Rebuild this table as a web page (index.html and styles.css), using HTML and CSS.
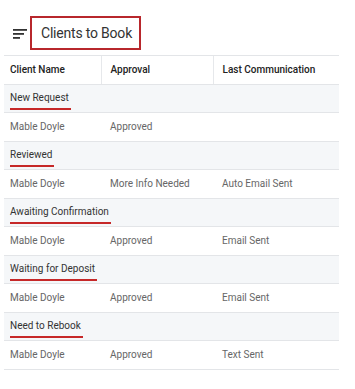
FILE: index.html
```html
<!DOCTYPE html>
<html lang="en">
<head>
<meta charset="utf-8">
<title>Clients to Book</title>
<link rel="stylesheet" href="styles.css">
</head>
<body>
  <div class="toolbar">
    <svg class="sort-icon" width="14" height="10" viewBox="0 0 14 10" aria-hidden="true">
      <rect x="0" y="0" width="14" height="1.8" />
      <rect x="0" y="4" width="11" height="1.8" />
      <rect x="0" y="8" width="7" height="1.8" />
    </svg>
    <h1 class="title">Clients to Book</h1>
  </div>

  <table class="clients">
    <colgroup>
      <col class="col-name">
      <col class="col-approval">
      <col class="col-comm">
    </colgroup>
    <thead>
      <tr>
        <th>Client Name</th>
        <th>Approval</th>
        <th>Last Communication</th>
      </tr>
    </thead>
    <tbody>
      <tr class="group"><td colspan="3"><span class="group-label">New Request</span></td></tr>
      <tr><td>Mable Doyle</td><td>Approved</td><td></td></tr>
      <tr class="group"><td colspan="3"><span class="group-label">Reviewed</span></td></tr>
      <tr><td>Mable Doyle</td><td>More Info Needed</td><td>Auto Email Sent</td></tr>
      <tr class="group"><td colspan="3"><span class="group-label">Awaiting Confirmation</span></td></tr>
      <tr><td>Mable Doyle</td><td>Approved</td><td>Email Sent</td></tr>
      <tr class="group"><td colspan="3"><span class="group-label">Waiting for Deposit</span></td></tr>
      <tr><td>Mable Doyle</td><td>Approved</td><td>Email Sent</td></tr>
      <tr class="group"><td colspan="3"><span class="group-label">Need to Rebook</span></td></tr>
      <tr><td>Mable Doyle</td><td>Approved</td><td>Text Sent</td></tr>
    </tbody>
  </table>
</body>
</html>
```

FILE: styles.css
```css
html, body {
  margin: 0;
  padding: 0;
  background: #ffffff;
}

body {
  font-family: Roboto, "Liberation Sans", Arial, sans-serif;
  color: #333;
}

.toolbar {
  display: flex;
  align-items: center;
  gap: 3px;
  padding: 16px 0 0 13px;
  height: 34px;
}

.sort-icon {
  fill: #333;
  display: block;
  margin-top: 1px;
}

.title {
  margin: 0;
  box-sizing: border-box;
  height: 34px;
  padding: 0 7px 0 9px;
  border: 2px solid #b8272c;
  font-size: 14px;
  letter-spacing: -0.2px;
  font-weight: 400;
  line-height: 30px;
  color: #333;
}

.clients {
  margin: 5px 0 0 4px;
  width: 335px;
  border-collapse: collapse;
  table-layout: fixed;
  font-size: 10px;
}

.col-name { width: 97px; }
.col-approval { width: 112px; }
.col-comm { width: 126px; }

.clients th,
.clients td {
  height: 28.5px;
  box-sizing: border-box;
  padding: 0 0 0 9px;
  border-bottom: 1px solid #e3e5e8;
  text-align: left;
  white-space: nowrap;
  overflow: hidden;
}

.clients th:first-child,
.clients td:first-child {
  padding-left: 6px;
}

.clients th {
  font-weight: 500;
  color: #222;
  border-top: 1px solid #e3e5e8;
}

.clients th + th {
  border-left: 1px solid #e6e8eb;
}

.clients td {
  color: #666;
}

.clients tr.group td {
  background: #f5f7f9;
  color: #333;
  vertical-align: bottom;
  padding-bottom: 2px;
}

.group-label {
  display: inline-block;
  padding: 0 2px 4px 0;
  border-bottom: 2px solid #c62828;
  line-height: 13px;
}
```
